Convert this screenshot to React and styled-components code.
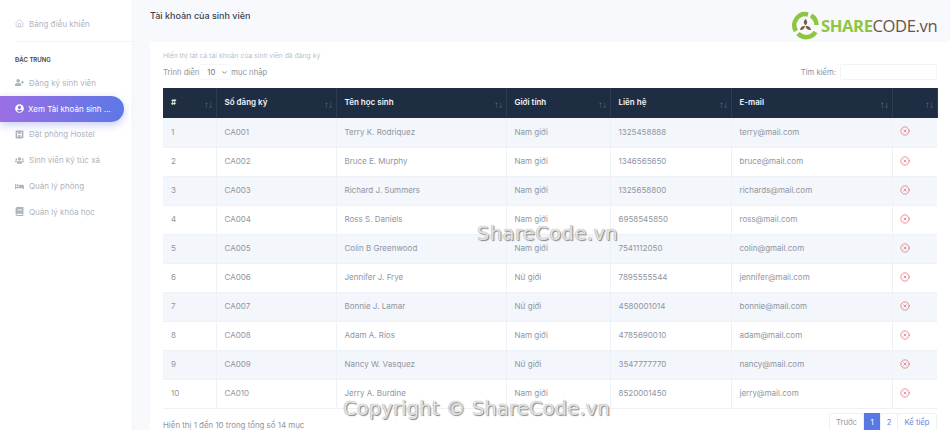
import React from "react";
import styled, { createGlobalStyle } from "styled-components";
import { ChevronDown, Home, CircleX } from "lucide-react";
import { FaUserPlus, FaUserCircle, FaHSquare, FaUsers, FaBed, FaBook } from "react-icons/fa";

const students = [
  ["CA001", "Terry K. Rodriquez", "Nam giới", "1325458888", "terry@mail.com"],
  ["CA002", "Bruce E. Murphy", "Nam giới", "1346565650", "bruce@mail.com"],
  ["CA003", "Richard J. Summers", "Nam giới", "1325658800", "richards@mail.com"],
  ["CA004", "Ross S. Daniels", "Nam giới", "6958545850", "ross@mail.com"],
  ["CA005", "Colin B Greenwood", "Nam giới", "7541112050", "colin@gmail.com"],
  ["CA006", "Jennifer J. Frye", "Nữ giới", "7895555544", "jennifer@mail.com"],
  ["CA007", "Bonnie J. Lamar", "Nữ giới", "4580001014", "bonnie@mail.com"],
  ["CA008", "Adam A. Rios", "Nam giới", "4785690010", "adam@mail.com"],
  ["CA009", "Nancy W. Vasquez", "Nữ giới", "3547777770", "nancy@mail.com"],
  ["CA010", "Jerry A. Burdine", "Nam giới", "8520001450", "jerry@mail.com"],
];

const columns = [
  ["#", 53],
  ["Số đăng ký", 120],
  ["Tên học sinh", 170],
  ["Giới tính", 104],
  ["Liên hệ", 121],
  ["E-mail", 161],
  ["", 45],
];

const menu = [
  [FaUserPlus, "Đăng ký sinh viên"],
  [FaUserCircle, "Xem Tài khoản sinh ...", true],
  [FaHSquare, "Đặt phòng Hostel"],
  [FaUsers, "Sinh viên ký túc xá"],
  [FaBed, "Quản lý phòng"],
  [FaBook, "Quản lý khóa học"],
];

const GlobalStyle = createGlobalStyle`
  html, body {
    margin: 0;
    width: 950px;
    height: 430px;
    overflow: hidden;
    font-family: Inter, "Liberation Sans", sans-serif;
    background: #f8f9fc;
  }
`;

const Page = styled.div`
  position: relative;
  display: flex;
  width: 950px;
  height: 430px;
  overflow: hidden;
`;

const Sidebar = styled.aside`
  width: 132px;
  flex-shrink: 0;
  background: #fff;
  border-right: 1px solid #f1f3f8;
`;

const HomeLink = styled.div`
  display: flex;
  align-items: center;
  gap: 5px;
  height: 42px;
  margin-left: 15px;
  padding-top: 6px;
  box-sizing: border-box;
  border-bottom: 1px solid #f2f4f7;
  font-size: 8px;
  color: #b0b4be;
`;

const SectionLabel = styled.div`
  margin: 14px 0 0 15px;
  height: 14px;
  line-height: 8px;
  font-size: 6px;
  font-weight: 600;
  color: #3d4350;
`;

const MenuList = styled.nav`
  display: flex;
  flex-direction: column;
`;

const MenuItem = styled.div`
  display: flex;
  align-items: center;
  gap: ${(p) => (p.$active ? "4px" : "5px")};
  width: 124px;
  height: 25.8px;
  padding-left: 15px;
  box-sizing: border-box;
  font-size: 8px;
  white-space: nowrap;
  color: ${(p) => (p.$active ? "#fff" : "#b0b4be")};
  border-radius: ${(p) => (p.$active ? "0 13px 13px 0" : "0")};
  background: ${(p) => (p.$active ? "linear-gradient(90deg, #9b6fe4, #5c78e6)" : "none")};
  box-shadow: ${(p) => (p.$active ? "0 3px 8px rgba(98, 116, 230, 0.35)" : "none")};
`;

const Main = styled.main`
  flex: 1;
  min-width: 0;
  padding-left: 17px;
`;

const Title = styled.h1`
  margin: 0;
  height: 42px;
  padding-top: 10px;
  box-sizing: border-box;
  font-size: 9px;
  line-height: 12px;
  font-weight: 500;
  color: #3b4150;
`;

const Card = styled.section`
  background: #fff;
  height: 388px;
  padding: 9px 13px 0;
  box-sizing: border-box;
`;

const Hint = styled.div`
  font-size: 6.8px;
  line-height: 10px;
  color: #bcc0c9;
`;

const Controls = styled.div`
  display: flex;
  justify-content: space-between;
  align-items: center;
  height: 16px;
  margin: 3px 0 8px;
  font-size: 7.7px;
  color: #9095a1;
`;

const Group = styled.div`
  display: flex;
  align-items: center;
`;

const Select = styled.div`
  display: flex;
  align-items: center;
  justify-content: space-between;
  width: 32px;
  height: 16px;
  padding: 0 2px 0 7px;
  box-sizing: border-box;
  border: 1px solid #f5f6f9;
  border-radius: 2px;
  color: #6f7582;
`;

const SearchBox = styled.div`
  width: 97px;
  height: 16px;
  margin-left: 4px;
  box-sizing: border-box;
  border: 1px solid #f1f3f6;
  border-radius: 2px;
`;

const Table = styled.table`
  width: 774px;
  border-collapse: collapse;
  table-layout: fixed;
`;

const HeadCell = styled.th`
  position: relative;
  height: 30px;
  padding: 0 0 2px 8px;
  box-sizing: border-box;
  background: #1e2d42;
  border-right: 1px solid #2c3b50;
  text-align: left;
  font-size: 8px;
  font-weight: 600;
  color: #f2f4f7;
`;

const SortMark = styled.span`
  position: absolute;
  right: 3px;
  top: 11px;
  font-family: "Liberation Sans", sans-serif;
  font-size: 9.5px;
  line-height: 11px;
  font-weight: 400;
  letter-spacing: -0.5px;
  color: #66738a;
`;

const Row = styled.tr`
  height: 29px;
  background: ${(p) => (p.$striped ? "#f3f6fa" : "#fff")};
`;

const Cell = styled.td`
  padding: 0 0 1px 8px;
  box-sizing: border-box;
  border-right: 1px solid #eef1f5;
  border-bottom: 1px solid #eef1f5;
  font-size: 8px;
  color: #9095a1;
`;

const ActionCell = styled(Cell)`
  padding: 0 0 2px 7px;
  line-height: 0;
  color: #e0575b;
  border-right: none;
`;

const Footer = styled.div`
  display: flex;
  justify-content: space-between;
  align-items: flex-start;
  padding-top: 4px;
  font-size: 7.9px;
  color: #9095a1;
`;

const FooterText = styled.span`
  padding-top: 7px;
`;

const Pager = styled.div`
  display: flex;
  height: 19px;
  border: 1px solid #eef0f4;
  border-radius: 2px;
  box-sizing: border-box;
`;

const PageLink = styled.span`
  display: flex;
  align-items: center;
  justify-content: center;
  width: ${(p) => p.$width}px;
  margin-top: -1px;
  height: 19px;
  box-sizing: border-box;
  border-right: 1px solid #eef0f4;
  font-size: 7.7px;
  background: ${(p) => (p.$current ? "#5b78e2" : "transparent")};
  color: ${(p) => (p.$current ? "#fff" : p.$muted ? "#9095a1" : "#6f85d8")};
  &:last-child {
    border-right: none;
  }
`;

const Logo = styled.div`
  position: absolute;
  left: 791px;
  top: 11px;
  display: flex;
  align-items: center;
  gap: 1px;
  font-size: 16.6px;
  letter-spacing: -0.4px;
  line-height: 28px;
  font-family: "Open Sans", sans-serif;
`;

const LogoGreen = styled.span`
  font-weight: 700;
  color: #8dc641;
`;

const LogoBrown = styled.span`
  font-weight: 400;
  color: #6b5442;
`;

const Watermark = styled.div`
  position: absolute;
  left: ${(p) => p.$left}px;
  top: ${(p) => p.$top}px;
  font-family: "DejaVu Sans", sans-serif;
  font-size: ${(p) => p.$size}px;
  line-height: 24px;
  letter-spacing: ${(p) => p.$spacing}px;
  white-space: nowrap;
  color: rgba(240, 240, 240, 0.9);
  text-shadow: 1px 1px 1px #858585, 0 0 1px #858585;
`;

const LogoMark = () => (
  <svg width="29" height="29" viewBox="0 0 29 29" fill="none">
    <path d="M17 3.500A11 11 0 0 0 5 20" stroke="#8dc641" strokeWidth="4.500" />
    <path d="M7 22.500A11 11 0 0 0 24.500 21" stroke="#8dc641" strokeWidth="4.500" />
    <path d="M20 4.500A11 11 0 0 1 25.500 14" stroke="#8dc641" strokeWidth="4.500" />
    <path d="M14.500 8c2 2 2.500 4 0 6.500c-2.500-2.500-2-4.500 0-6.500z" fill="#7a5c43" />
    <path d="M9 19c.5-3 2.500-4.500 5-4c-.5 3-2.500 4.500-5 4z" fill="#7a5c43" />
    <path d="M20 19c-3 .5-5-1-5.500-4c3-.5 5 1 5.500 4z" fill="#7a5c43" />
  </svg>
);

export default function App() {
  return (
    <Page>
      <GlobalStyle />
      <Sidebar>
        <HomeLink>
          <Home size={9} strokeWidth={1.5} />
          Bảng điều khiển
        </HomeLink>
        <SectionLabel>ĐẶC TRƯNG</SectionLabel>
        <MenuList>
          {menu.map(([Icon, label, active]) => (
            <MenuItem key={label} $active={active}>
              <Icon size={9} />
              {label}
            </MenuItem>
          ))}
        </MenuList>
      </Sidebar>
      <Main>
        <Title>Tài khoản của sinh viên</Title>
        <Card>
          <Hint>Hiển thị tất cả tài khoản của sinh viên đã đăng ký</Hint>
          <Controls>
            <Group>
              Trình diễn
              <Select>
                10
                <ChevronDown size={7} strokeWidth={3} />
              </Select>
              mục nhập
            </Group>
            <Group>
              Tìm kiếm:
              <SearchBox />
            </Group>
          </Controls>
          <Table>
            <colgroup>
              {columns.map(([name, width]) => (
                <col key={name} width={width} />
              ))}
            </colgroup>
            <thead>
              <tr>
                {columns.map(([name]) => (
                  <HeadCell key={name}>
                    {name}
                    <SortMark>↑↓</SortMark>
                  </HeadCell>
                ))}
              </tr>
            </thead>
            <tbody>
              {students.map((s, i) => (
                <Row key={s[0]} $striped={i % 2 === 0}>
                  <Cell>{i + 1}</Cell>
                  {s.map((v) => (
                    <Cell key={v}>{v}</Cell>
                  ))}
                  <ActionCell>
                    <CircleX size={10} strokeWidth={1.5} />
                  </ActionCell>
                </Row>
              ))}
            </tbody>
          </Table>
          <Footer>
            <FooterText>Hiển thị 1 đến 10 trong tổng số 14 mục</FooterText>
            <Pager>
              <PageLink $width={34} $muted>Trước</PageLink>
              <PageLink $width={17} $current>1</PageLink>
              <PageLink $width={17}>2</PageLink>
              <PageLink $width={38}>Kế tiếp</PageLink>
            </Pager>
          </Footer>
        </Card>
      </Main>
      <Logo>
        <LogoMark />
        <span>
          <LogoGreen>SHARE</LogoGreen>
          <LogoBrown>CODE.vn</LogoBrown>
        </span>
      </Logo>
      <Watermark $left={477} $top={222} $size={19.5} $spacing={0.4}>ShareCode.vn</Watermark>
      <Watermark $left={343} $top={397} $size={19.5} $spacing={0.15}>Copyright © ShareCode.vn</Watermark>
    </Page>
  );
}
